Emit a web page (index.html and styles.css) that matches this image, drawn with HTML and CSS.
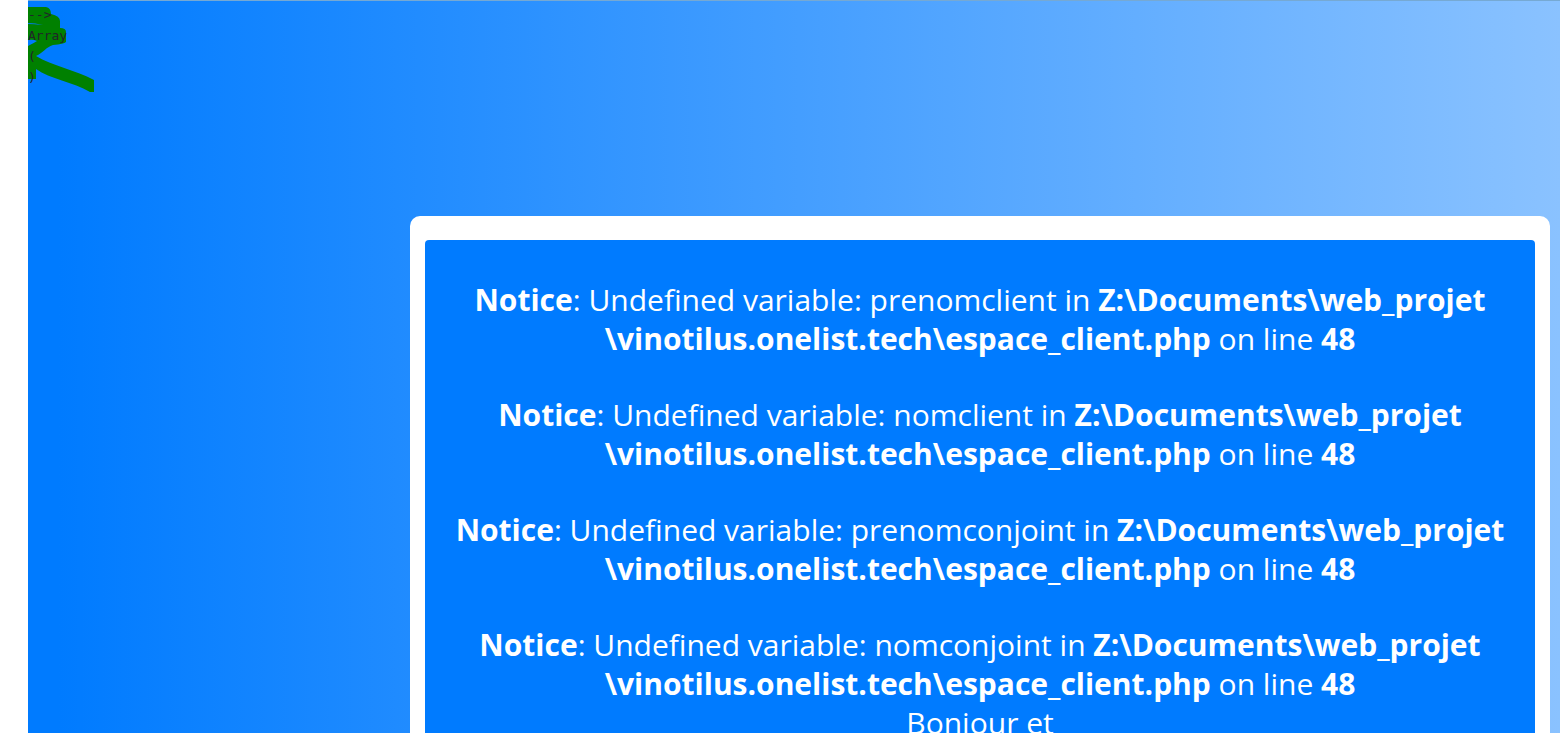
FILE: index.html
```
<!DOCTYPE html>
<html lang="fr">
<head>
    <meta charset="UTF-8">
    <meta name="viewport" content="width=device-width, initial-scale=1.0">
    <title>Espace client</title>
    <link rel="stylesheet" href="styles.css">
</head>
<body>
    <div class="page">
        <svg class="scribble" width="68" height="94" viewBox="0 1 68 94" aria-hidden="true">
            <path fill="#008000" d="M0 7H18Q23 8 23 14Q32 16 32 21V28Q38 28 38 32V42Q36 44 25 45C18 47 15 53 8 56C24 66 48 70 66 80V92H62C45 82 22 79 8 69V79H0V46Q6 43 9 41Q5 39 0 40V24Q6 24 15 25Q7 23 0 23Z"/>
        </svg>
        <pre class="debug">--&gt;
Array
(
)</pre>

        <main class="card">
            <div class="card-title">
                <p><b>Notice</b>: Undefined variable: prenomclient in <b>Z:\Documents\web_projet<wbr>\vinotilus.onelist.tech\espace_client.php</b> on line <b>48</b></p>
                <p><b>Notice</b>: Undefined variable: nomclient in <b>Z:\Documents\web_projet<wbr>\vinotilus.onelist.tech\espace_client.php</b> on line <b>48</b></p>
                <p><b>Notice</b>: Undefined variable: prenomconjoint in <b>Z:\Documents\web_projet<wbr>\vinotilus.onelist.tech\espace_client.php</b> on line <b>48</b></p>
                <p><b>Notice</b>: Undefined variable: nomconjoint in <b>Z:\Documents\web_projet<wbr>\vinotilus.onelist.tech\espace_client.php</b> on line <b>48</b></p>
                <h1>Bonjour et</h1>
            </div>
        </main>
    </div>
</body>
</html>
```
FILE: styles.css
```
* {
    box-sizing: border-box;
}

body {
    margin: 0;
    height: 100vh;
    overflow: hidden;
    background-color: #fff;
    font-family: "Segoe UI", "Open Sans", "Noto Sans", sans-serif;
}

.page {
    position: relative;
    min-height: 100vh;
    margin-left: 28px;
    padding-right: 10px;
    border-top: 1px solid #76a9d3;
    background: linear-gradient(to right, #007bff, #007bff 2%, #8ac2ff);
}

.scribble {
    position: absolute;
    top: 0;
    left: 0;
}

.debug {
    position: relative;
    height: 120px;
    margin: 0 0 95px;
    padding-top: 3px;
    font-family: "DejaVu Sans Mono", monospace;
    font-size: 13px;
    line-height: 21px;
    color: #212529;
}

.card {
    margin-left: 382px;
    padding: 24px 15px;
    border-radius: 10px;
    background-color: #fff;
}

.card-title {
    padding: 40px 15px;
    border-radius: 4px;
    background-color: #007bff;
    color: #fff;
    font-size: 30px;
    line-height: 39px;
    text-align: center;
}

.card-title p {
    margin: 0 0 37px;
}

.card-title p:last-of-type {
    margin-bottom: 0;
}

.card-title h1 {
    margin: 0;
    font-size: 30px;
    font-weight: 400;
}
```
